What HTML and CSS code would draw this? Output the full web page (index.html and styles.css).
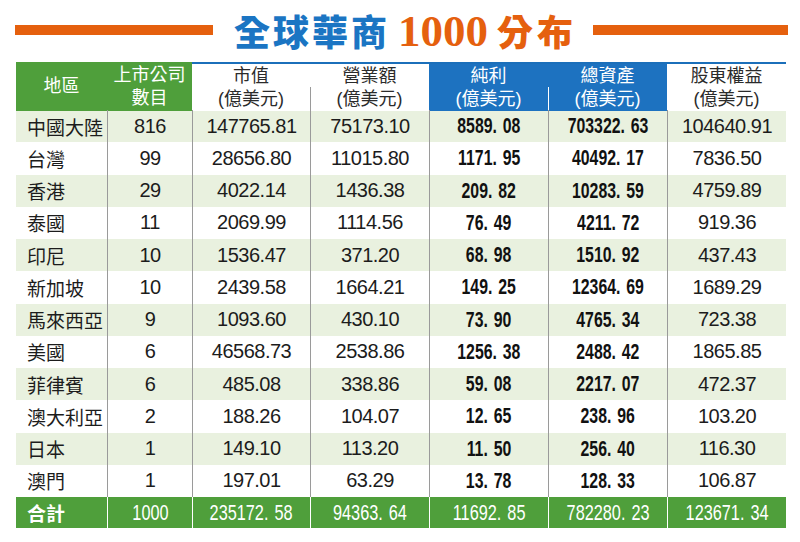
FILE: index.html
```html
<!DOCTYPE html>
<html lang="zh-Hant">
<head>
<meta charset="utf-8">
<title>全球華商1000分布</title>
<link rel="stylesheet" href="styles.css">
</head>
<body>
<div class="page">
  <div class="title">
    <div class="bar bar-left"></div>
    <h1 class="heading"><span class="h-blue">全球華商</span><span class="h-num">1000</span><span class="h-orange">分布</span></h1>
    <div class="bar bar-right"></div>
  </div>
  <div class="table">
    <div class="row head">
      <div class="cell h-green"><span class="ln">地區</span></div>
      <div class="cell h-green"><span class="ln">上市公司</span><span class="ln">數目</span></div>
      <div class="cell h-white"><span class="ln">市值</span><span class="ln">(億美元)</span></div>
      <div class="cell h-white div-gray"><span class="ln">營業額</span><span class="ln">(億美元)</span></div>
      <div class="cell h-blue-cell"><span class="ln">純利</span><span class="ln">(億美元)</span></div>
      <div class="cell h-blue-cell div-white"><span class="ln">總資產</span><span class="ln">(億美元)</span></div>
      <div class="cell h-white"><span class="ln">股東權益</span><span class="ln">(億美元)</span></div>
    </div>
    <div class="row odd"><div class="cell name">中國大陸</div><div class="cell">816</div><div class="cell">147765.81</div><div class="cell">75173.10</div><div class="cell"><span class="bn">8589. 08</span></div><div class="cell"><span class="bn">703322. 63</span></div><div class="cell">104640.91</div></div>
    <div class="row"><div class="cell name">台灣</div><div class="cell">99</div><div class="cell">28656.80</div><div class="cell">11015.80</div><div class="cell"><span class="bn">1171. 95</span></div><div class="cell"><span class="bn">40492. 17</span></div><div class="cell">7836.50</div></div>
    <div class="row odd"><div class="cell name">香港</div><div class="cell">29</div><div class="cell">4022.14</div><div class="cell">1436.38</div><div class="cell"><span class="bn">209. 82</span></div><div class="cell"><span class="bn">10283. 59</span></div><div class="cell">4759.89</div></div>
    <div class="row"><div class="cell name">泰國</div><div class="cell">11</div><div class="cell">2069.99</div><div class="cell">1114.56</div><div class="cell"><span class="bn">76. 49</span></div><div class="cell"><span class="bn">4211. 72</span></div><div class="cell">919.36</div></div>
    <div class="row odd"><div class="cell name">印尼</div><div class="cell">10</div><div class="cell">1536.47</div><div class="cell">371.20</div><div class="cell"><span class="bn">68. 98</span></div><div class="cell"><span class="bn">1510. 92</span></div><div class="cell">437.43</div></div>
    <div class="row"><div class="cell name">新加坡</div><div class="cell">10</div><div class="cell">2439.58</div><div class="cell">1664.21</div><div class="cell"><span class="bn">149. 25</span></div><div class="cell"><span class="bn">12364. 69</span></div><div class="cell">1689.29</div></div>
    <div class="row odd"><div class="cell name">馬來西亞</div><div class="cell">9</div><div class="cell">1093.60</div><div class="cell">430.10</div><div class="cell"><span class="bn">73. 90</span></div><div class="cell"><span class="bn">4765. 34</span></div><div class="cell">723.38</div></div>
    <div class="row"><div class="cell name">美國</div><div class="cell">6</div><div class="cell">46568.73</div><div class="cell">2538.86</div><div class="cell"><span class="bn">1256. 38</span></div><div class="cell"><span class="bn">2488. 42</span></div><div class="cell">1865.85</div></div>
    <div class="row odd"><div class="cell name">菲律賓</div><div class="cell">6</div><div class="cell">485.08</div><div class="cell">338.86</div><div class="cell"><span class="bn">59. 08</span></div><div class="cell"><span class="bn">2217. 07</span></div><div class="cell">472.37</div></div>
    <div class="row"><div class="cell name">澳大利亞</div><div class="cell">2</div><div class="cell">188.26</div><div class="cell">104.07</div><div class="cell"><span class="bn">12. 65</span></div><div class="cell"><span class="bn">238. 96</span></div><div class="cell">103.20</div></div>
    <div class="row odd"><div class="cell name">日本</div><div class="cell">1</div><div class="cell">149.10</div><div class="cell">113.20</div><div class="cell"><span class="bn">11. 50</span></div><div class="cell"><span class="bn">256. 40</span></div><div class="cell">116.30</div></div>
    <div class="row"><div class="cell name">澳門</div><div class="cell">1</div><div class="cell">197.01</div><div class="cell">63.29</div><div class="cell"><span class="bn">13. 78</span></div><div class="cell"><span class="bn">128. 33</span></div><div class="cell">106.87</div></div>
    <div class="row total">
      <div class="cell name">合計</div>
      <div class="cell"><span class="cn">1000</span></div>
      <div class="cell"><span class="cn">235172. 58</span></div>
      <div class="cell"><span class="cn">94363. 64</span></div>
      <div class="cell"><span class="cn">11692. 85</span></div>
      <div class="cell"><span class="cn">782280. 23</span></div>
      <div class="cell"><span class="cn">123671. 34</span></div>
    </div>
  </div>
</div>
</body>
</html>
```
FILE: styles.css
```css
* { box-sizing: border-box; }
html, body { margin: 0; padding: 0; background: #fff; }
body {
  width: 800px;
  height: 542px;
  overflow: hidden;
  font-family: "Liberation Sans", "Noto Sans CJK TC", sans-serif;
  color: #1c1c1c;
}
.page { width: 800px; }

.title {
  height: 62px;
  display: flex;
  align-items: center;
  padding-left: 15px;
}
.bar {
  height: 10px;
  background: #e5600e;
  margin-top: -2px;
}
.bar-left { width: 198px; }
.bar-right { width: 195px; }
.heading {
  margin: 0 16px 0 21px;
  display: flex;
  align-items: baseline;
  font-weight: 900;
  line-height: 1;
  white-space: nowrap;
}
.h-blue {
  font-family: "Noto Sans CJK TC", sans-serif;
  font-size: 36px;
  letter-spacing: 3px;
  color: #1b75c3;
}
.h-num {
  font-family: "Liberation Serif", serif;
  font-weight: 700;
  font-size: 45px;
  color: #e5600e;
  margin: 0 9px 0 8px;
}
.h-orange {
  font-family: "Noto Sans CJK TC", sans-serif;
  font-size: 36px;
  letter-spacing: 4px;
  color: #e5600e;
}

.table {
  margin-left: 16px;
  width: 770px;
}
.row {
  display: grid;
  grid-template-columns: 91px 85px 118px 119px 119px 119px 119px;
  height: 32.25px;
  background: #fff;
}
.row.odd { background: #e9f1df; }
.cell {
  display: flex;
  align-items: center;
  justify-content: center;
  font-size: 20px;
  letter-spacing: -0.5px;
  border-left: 1px solid #9a9a9a;
  white-space: nowrap;
}
.cell:first-child { border-left: none; }
.cell.name {
  justify-content: flex-start;
  padding-left: 11px;
  font-family: "Noto Sans CJK TC", sans-serif;
  font-size: 19px;
  letter-spacing: 0;
}

.bn {
  display: inline-block;
  font-weight: 700;
  font-size: 22px;
  letter-spacing: 0;
  word-spacing: 2px;
  transform: scaleX(0.72);
  color: #111;
}

.row.head {
  height: 48px;
}
.head .cell {
  border-left: none;
  flex-direction: column;
  font-family: "Liberation Sans", "Noto Sans CJK TC", sans-serif;
  font-size: 18px;
  letter-spacing: 0;
  text-align: center;
}
.ln {
  display: block;
  height: 23px;
  line-height: 23px;
}
.h-green { background: #4f9f3b; color: #fff; }
.h-white {
  background: #fff;
  color: #2b2b2b;
  border-top: 2px solid #1b6fba;
  padding-top: 1px;
}
.h-blue-cell {
  background: #1d72c0;
  color: #fff;
  border-top: 2px solid #1b6fba;
  padding-top: 1px;
}
.head .div-gray {
  background: #fff linear-gradient(#9a9a9a, #9a9a9a) left bottom / 1px 24px no-repeat;
}
.head .div-white {
  background: #1d72c0 linear-gradient(#ffffff, #ffffff) left bottom / 1px 24px no-repeat;
}

.row.total {
  height: 31px;
  background: #4f9f3b;
  color: #fff;
}
.total .cell { border-left-color: #ffffff; }
.total .cell.name { font-weight: 700; color: #fff; }
.cn {
  display: inline-block;
  font-size: 22px;
  letter-spacing: 0;
  word-spacing: 2px;
  transform: scaleX(0.74);
}
```
